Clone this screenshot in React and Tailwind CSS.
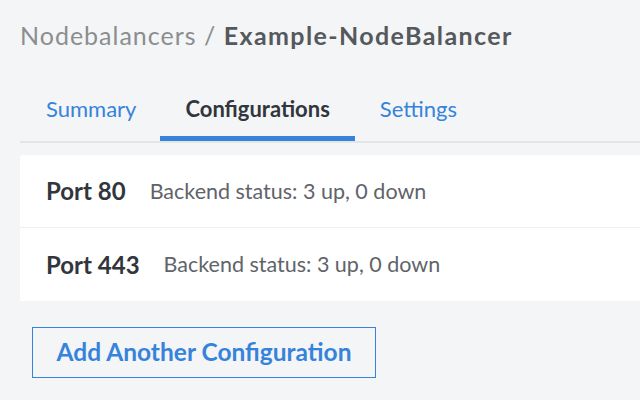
export default function App() {
  const ports = [
    { port: 80, status: "Backend status: 3 up, 0 down" },
    { port: 443, status: "Backend status: 3 up, 0 down" },
  ];

  return (
    <div className="w-[640px] h-[400px] overflow-hidden bg-[#f4f5f6] font-['Lato',sans-serif] pl-5">
      {/* Breadcrumb */}
      <div className="pt-[16px] h-[72px] text-[25px] leading-[38px] tracking-[1px]">
        <span className="text-[#8b8d90]">Nodebalancers</span>
        <span className="text-[#8b8d90]"> / </span>
        <span className="font-bold text-[#55585c] tracking-[1.4px]">Example-NodeBalancer</span>
      </div>

      {/* Tabs */}
      <div className="flex border-b-2 border-[#e3e5e8] h-[71px]">
        <button className="pl-[26px] pr-[24px] pt-2 text-[22px] text-[#3683dc] border-b-4 border-transparent">
          Summary
        </button>
        <button className="px-[25px] pt-2 text-[22px] font-bold text-[#32363c] border-b-[5px] border-[#3683dc]">
          Configurations
        </button>
        <button className="px-[25px] pt-2 text-[22px] text-[#3683dc] border-b-4 border-transparent">
          Settings
        </button>
      </div>

      {/* Config rows */}
      <div className="mt-[12px] bg-white rounded-tl-[3px]">
        {ports.map((p, i) => (
          <div
            key={p.port}
            className={`flex items-center h-[73px] px-[26px] ${i === 0 ? "border-b border-[#eeeff1]" : ""}`}
          >
            <span className="text-[24px] font-bold text-[#32363c]">Port {p.port}</span>
            <span className="ml-6 text-[21.5px] text-[#606469]">{p.status}</span>
          </div>
        ))}
      </div>

      {/* Add button */}
      <div className="pt-[26px] pl-3">
        <button className="h-[51px] w-[344px] border border-[#3683dc] text-[24.5px] font-bold text-[#3683dc]">
          Add Another Configuration
        </button>
      </div>
    </div>
  );
}
